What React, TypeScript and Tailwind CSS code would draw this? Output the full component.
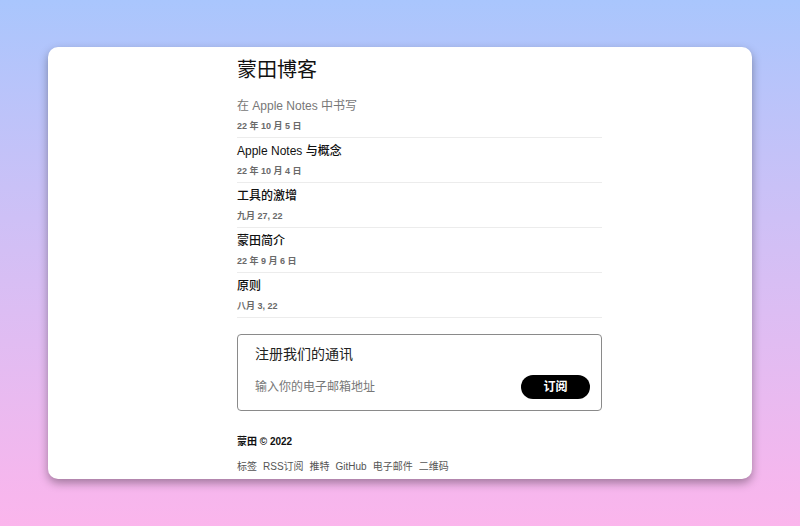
import React from "react";

const posts = [
  { title: "在 Apple Notes 中书写", date: "22 年 10 月 5 日", muted: true },
  { title: "Apple Notes 与概念", date: "22 年 10 月 4 日" },
  { title: "工具的激增", date: "九月 27, 22" },
  { title: "蒙田简介", date: "22 年 9 月 6 日" },
  { title: "原则", date: "八月 3, 22" },
];

const links = ["标签", "RSS订阅", "推特", "GitHub", "电子邮件", "二维码"];

export default function App() {
  return (
    <div
      className="w-full h-[526px] bg-gradient-to-b from-[#a9c6fd] to-[#fbb5ec] pt-[47px] px-[48px] overflow-hidden"
      style={{ fontFamily: '"Liberation Sans", "Noto Sans CJK SC", sans-serif' }}
    >
      <div className="h-[432px] bg-white rounded-[10px] shadow-[0_4px_10px_rgba(0,0,0,0.35)] overflow-hidden">
        <div className="ml-[189px] w-[365px] pt-[9px]">
          {/* HEADER */}
          <h1 className="text-[20px] leading-[28px] text-[#111] mb-[9px]">蒙田博客</h1>

          {/* POSTS */}
          <ul>
            {posts.map((p) => (
              <li key={p.title} className="pt-[3px] pb-[3px] border-b border-[#ececec]">
                <p
                  className={
                    p.muted
                      ? "text-[12px] leading-[20px] text-[#777]"
                      : "text-[12px] leading-[20px] text-[#111] font-medium"
                  }
                >
                  {p.title}
                </p>
                <p className="mt-[2px] text-[9px] leading-[16px] font-semibold text-[#6a6a6a]">
                  {p.date}
                </p>
              </li>
            ))}
          </ul>

          {/* NEWSLETTER */}
          <div className="mt-[16px] h-[77px] border border-[#8a8a8a] rounded-[4px] pl-[17px] pr-[11px] pt-[9px]">
            <p className="text-[14px] leading-[20px] text-[#222]">注册我们的通讯</p>
            <div className="mt-[11px] flex items-center justify-between">
              <span className="text-[12px] text-[#777]">输入你的电子邮箱地址</span>
              <button className="w-[69px] h-[24px] rounded-full bg-black text-white text-[12px] font-bold">
                订阅
              </button>
            </div>
          </div>

          {/* FOOTER */}
          <p className="mt-[24px] text-[10px] leading-[14px] font-semibold text-[#111]">蒙田 © 2022</p>
          <div className="mt-[11px] flex gap-[6px] text-[10px] leading-[14px] text-[#555]">
            {links.map((l) => (
              <span key={l}>{l}</span>
            ))}
          </div>
        </div>
      </div>
    </div>
  );
}
